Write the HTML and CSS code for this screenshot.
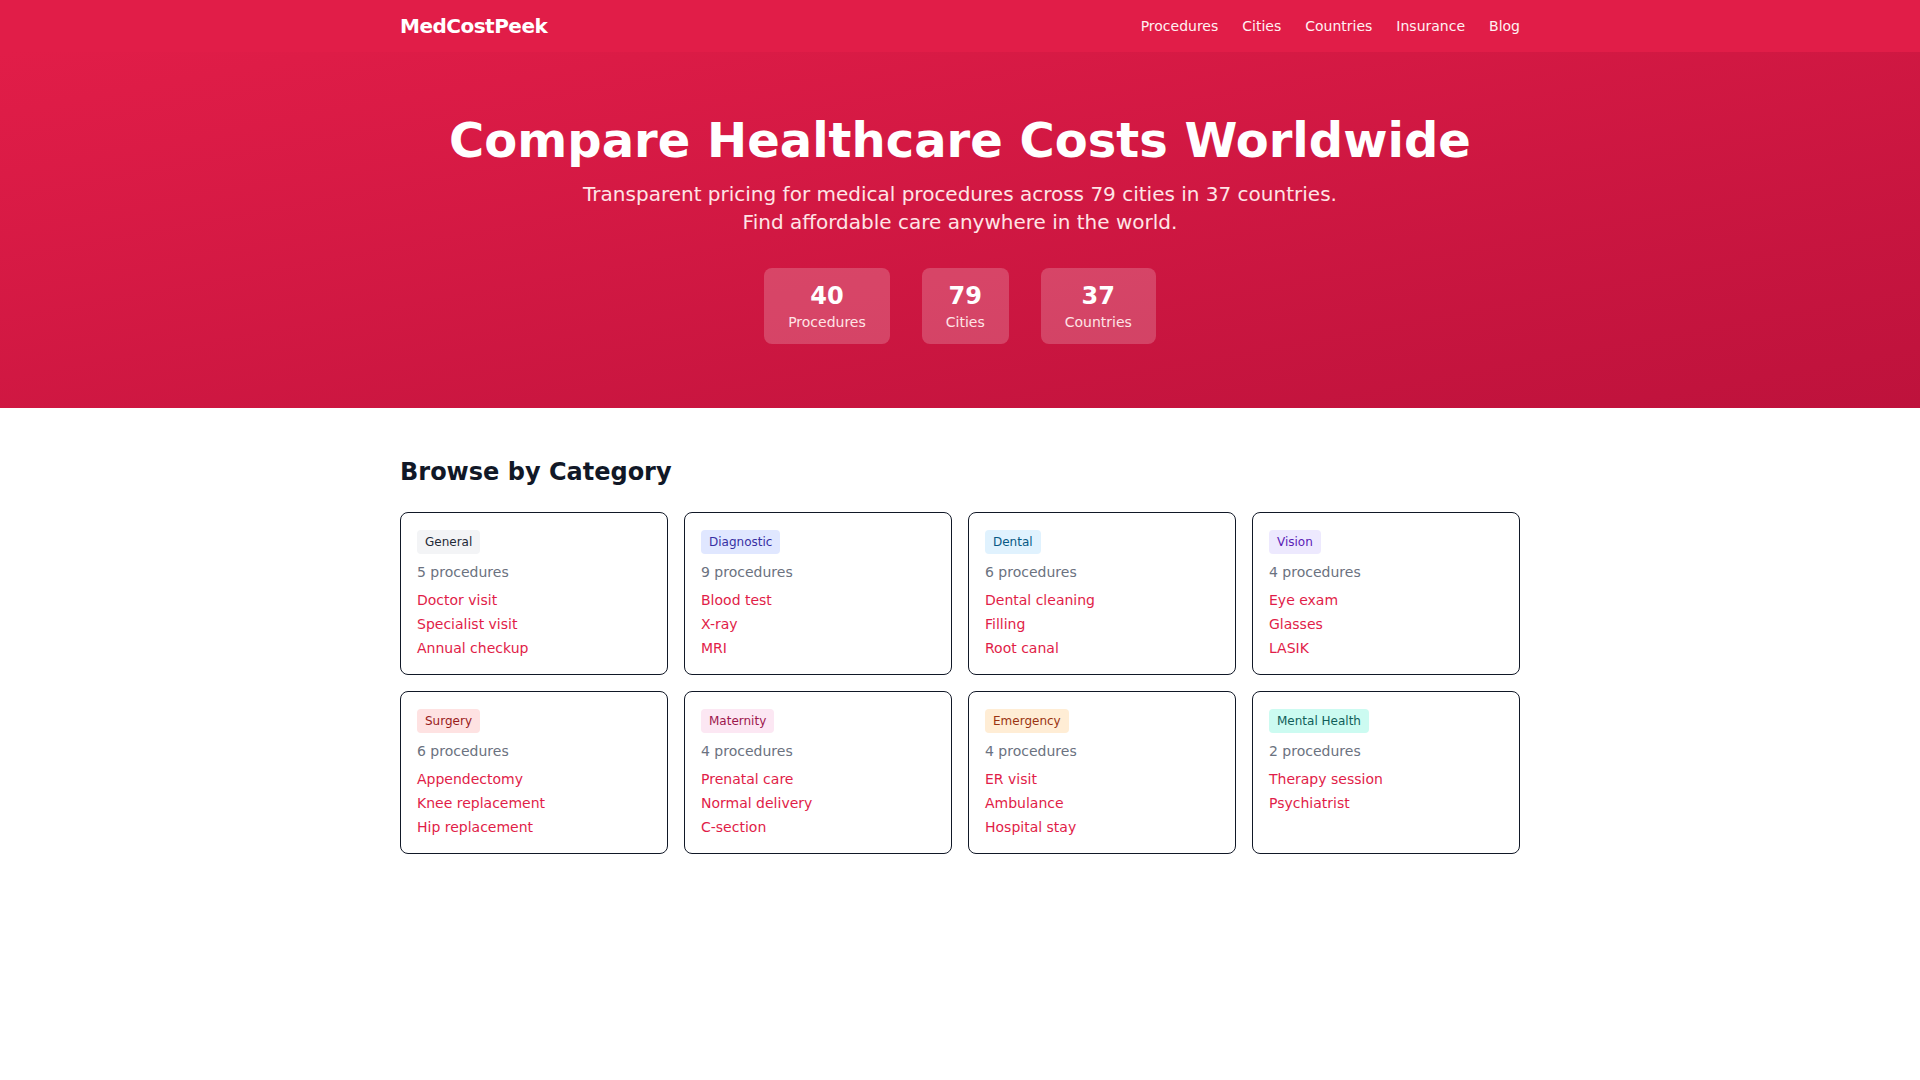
FILE: index.html
```html
<!DOCTYPE html>
<html lang="en">
<head>
<meta charset="utf-8">
<title>MedCostPeek - Compare Healthcare Costs Worldwide</title>
<link rel="stylesheet" href="styles.css">
</head>
<body>
<header class="site-header">
  <div class="container header-inner">
    <a class="logo" href="#">MedCostPeek</a>
    <nav class="nav">
      <a href="#">Procedures</a>
      <a href="#">Cities</a>
      <a href="#">Countries</a>
      <a href="#">Insurance</a>
      <a href="#">Blog</a>
    </nav>
  </div>
</header>

<section class="hero">
  <div class="container hero-inner">
    <h1 class="hero-title">Compare Healthcare Costs Worldwide</h1>
    <p class="hero-sub">Transparent pricing for medical procedures across 79 cities in 37 countries. Find affordable care anywhere in the world.</p>
    <div class="stats">
      <div class="stat"><div class="stat-num">40</div><div class="stat-label">Procedures</div></div>
      <div class="stat"><div class="stat-num">79</div><div class="stat-label">Cities</div></div>
      <div class="stat"><div class="stat-num">37</div><div class="stat-label">Countries</div></div>
    </div>
  </div>
</section>

<main class="container categories">
  <h2 class="section-title">Browse by Category</h2>
  <div class="grid">
    <div class="card">
      <span class="badge badge-general">General</span>
      <p class="count">5 procedures</p>
      <ul class="links"><li><a href="#">Doctor visit</a></li><li><a href="#">Specialist visit</a></li><li><a href="#">Annual checkup</a></li></ul>
    </div>
    <div class="card">
      <span class="badge badge-diagnostic">Diagnostic</span>
      <p class="count">9 procedures</p>
      <ul class="links"><li><a href="#">Blood test</a></li><li><a href="#">X-ray</a></li><li><a href="#">MRI</a></li></ul>
    </div>
    <div class="card">
      <span class="badge badge-dental">Dental</span>
      <p class="count">6 procedures</p>
      <ul class="links"><li><a href="#">Dental cleaning</a></li><li><a href="#">Filling</a></li><li><a href="#">Root canal</a></li></ul>
    </div>
    <div class="card">
      <span class="badge badge-vision">Vision</span>
      <p class="count">4 procedures</p>
      <ul class="links"><li><a href="#">Eye exam</a></li><li><a href="#">Glasses</a></li><li><a href="#">LASIK</a></li></ul>
    </div>
    <div class="card">
      <span class="badge badge-surgery">Surgery</span>
      <p class="count">6 procedures</p>
      <ul class="links"><li><a href="#">Appendectomy</a></li><li><a href="#">Knee replacement</a></li><li><a href="#">Hip replacement</a></li></ul>
    </div>
    <div class="card">
      <span class="badge badge-maternity">Maternity</span>
      <p class="count">4 procedures</p>
      <ul class="links"><li><a href="#">Prenatal care</a></li><li><a href="#">Normal delivery</a></li><li><a href="#">C-section</a></li></ul>
    </div>
    <div class="card">
      <span class="badge badge-emergency">Emergency</span>
      <p class="count">4 procedures</p>
      <ul class="links"><li><a href="#">ER visit</a></li><li><a href="#">Ambulance</a></li><li><a href="#">Hospital stay</a></li></ul>
    </div>
    <div class="card">
      <span class="badge badge-mental">Mental Health</span>
      <p class="count">2 procedures</p>
      <ul class="links"><li><a href="#">Therapy session</a></li><li><a href="#">Psychiatrist</a></li></ul>
    </div>
  </div>
</main>
</body>
</html>
```

FILE: styles.css
```css
* { box-sizing: border-box; }
html, body { margin: 0; padding: 0; }
body {
  font-family: "DejaVu Sans", sans-serif;
  color: #111827;
  background: #fff;
  line-height: 1.5;
}
a { text-decoration: none; color: inherit; }
h1, h2, p, ul { margin: 0; padding: 0; }
ul { list-style: none; }

.container {
  max-width: 1152px;
  margin: 0 auto;
  padding: 0 16px;
}

.site-header {
  background: #e11d48;
  color: #fff;
}
.header-inner {
  height: 52px;
  display: flex;
  align-items: center;
  justify-content: space-between;
}
.logo {
  font-size: 20px;
  font-weight: 700;
  line-height: 28px;
  letter-spacing: -0.025em;
}
.nav {
  display: flex;
  gap: 24px;
  font-size: 14px;
  line-height: 20px;
}
.nav a { color: #fff1f2; }

.hero {
  background: linear-gradient(to bottom right, #e11d48, #be123c);
  color: #fff;
  padding: 64px 0;
}
.hero-inner {
  display: flex;
  flex-direction: column;
  align-items: center;
  text-align: center;
}
.hero-title {
  font-size: 48px;
  line-height: 1;
  font-weight: 700;
  margin-bottom: 16px;
}
.hero-sub {
  font-size: 20px;
  line-height: 28px;
  color: #ffe4e6;
  max-width: 768px;
}
.stats {
  display: flex;
  gap: 32px;
  margin-top: 32px;
}
.stat {
  background: rgba(255, 255, 255, 0.2);
  border-radius: 8px;
  padding: 12px 24px;
}
.stat-num {
  font-size: 24px;
  line-height: 32px;
  font-weight: 700;
}
.stat-label {
  font-size: 14px;
  line-height: 20px;
  color: #ffe4e6;
}

.categories {
  padding-top: 48px;
  padding-bottom: 48px;
}
.section-title {
  font-size: 24px;
  line-height: 32px;
  font-weight: 700;
  color: #111827;
  margin-bottom: 24px;
}
.grid {
  display: grid;
  grid-template-columns: repeat(4, 1fr);
  gap: 16px;
}
.card {
  border: 1px solid #111827;
  border-radius: 8px;
  padding: 16px;
}
.badge {
  display: inline-block;
  font-size: 12px;
  line-height: 16px;
  padding: 4px 8px;
  border-radius: 4px;
  margin-bottom: 8px;
}
.badge-general { background: #f3f4f6; color: #1f2937; }
.badge-diagnostic { background: #e0e7ff; color: #3730a3; }
.badge-dental { background: #e0f2fe; color: #075985; }
.badge-vision { background: #ede9fe; color: #5b21b6; }
.badge-surgery { background: #fee2e2; color: #991b1b; }
.badge-maternity { background: #fce7f3; color: #9d174d; }
.badge-emergency { background: #ffedd5; color: #9a3412; }
.badge-mental { background: #ccfbf1; color: #115e59; }

.count {
  font-size: 14px;
  line-height: 20px;
  color: #6b7280;
  margin-bottom: 8px;
}
.links {
  display: flex;
  flex-direction: column;
  gap: 4px;
  font-size: 14px;
  line-height: 20px;
}
.links a { color: #e11d48; }
```
